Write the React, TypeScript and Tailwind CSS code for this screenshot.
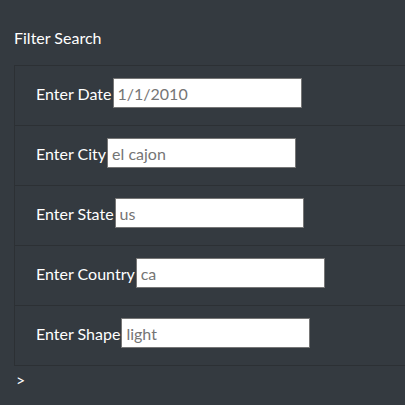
import React from "react";

const rows = [
  { label: "Enter Date", ph: "1/1/2010" },
  { label: "Enter City", ph: "el cajon" },
  { label: "Enter State", ph: "us" },
  { label: "Enter Country", ph: "ca" },
  { label: "Enter Shape", ph: "light" },
];

const FONT = '"Segoe UI", Lato, sans-serif';

export default function App() {
  return (
    <div
      className="w-[405px] h-[405px] overflow-hidden bg-[#343a40] text-white"
      style={{ fontFamily: FONT }}
    >
      <div className="pl-[14px] pt-[26px] text-[16px] leading-[24px]">Filter Search</div>
      <div className="ml-[14px] mt-[15px] w-[420px] border-l border-t border-b border-[#2c3034]">
        {rows.map((r, i) => (
          <div
            key={r.label}
            className={`flex items-baseline pl-[21px] pt-[12px] ${i < rows.length - 1 ? "border-b border-[#2c3034] h-[60px]" : "h-[59px]"}`}
          >
            <label className="text-[16px] mr-[1px]">{r.label}</label>
            <input
              placeholder={r.ph}
              className="w-[189px] h-[30px] bg-white border border-[#767676] px-[4px] text-[16px] text-black placeholder:text-[#757575] outline-none"
              style={{ fontFamily: FONT }}
            />
          </div>
        ))}
      </div>
      <div className="pl-[16px] pt-[2px] text-[16px] leading-[24px]">&gt;</div>
    </div>
  );
}
